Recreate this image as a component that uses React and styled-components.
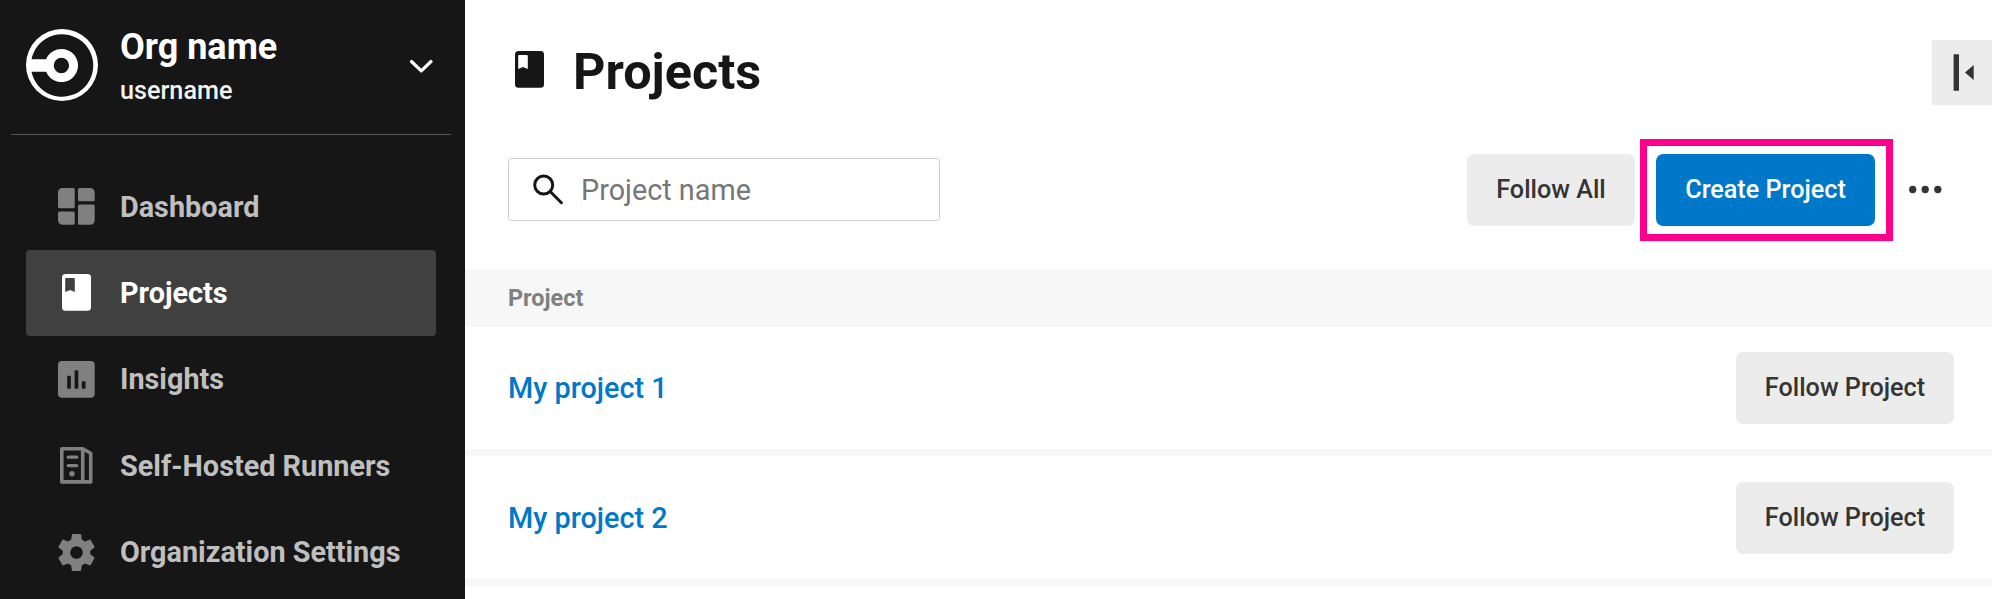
import React from 'react';
import styled, { createGlobalStyle } from 'styled-components';

const GlobalStyle = createGlobalStyle`
  *, *::before, *::after { box-sizing: border-box; }
  body {
    margin: 0;
    background: #fff;
    color: #161616;
    font-family: Roboto, "Liberation Sans", sans-serif;
    overflow: hidden;
  }
`;

const Page = styled.div`
  display: flex;
  width: 1992px;
  height: 599px;
  overflow: hidden;
`;

const Sidebar = styled.aside`
  flex: none;
  width: 465px;
  height: 100%;
  background: #161616;
`;

const OrgSwitcher = styled.header`
  display: flex;
  align-items: flex-start;
  height: 135px;
  margin: 0 14px 0 11px;
  padding: 29px 18px 0 15px;
  border-bottom: 1px solid #555;

  > svg { flex: none; }
`;

const OrgText = styled.div`
  flex: 1;
  margin-left: 22px;
`;

const OrgName = styled.div`
  height: 36px;
  color: #fff;
  font-size: 36px;
  font-weight: 700;
  line-height: 36px;
`;

const UserName = styled.div`
  margin-top: 11px;
  color: #f3f3f3;
  font-size: 25.2px;
  font-weight: 500;
  line-height: 30px;
`;

const ChevronSlot = styled.span`
  display: flex;
  margin-top: 30px;
`;

const Nav = styled.nav`
  display: flex;
  flex-direction: column;
  padding: 28.4px 29px 0 26px;
`;

const NavItem = styled.a`
  display: flex;
  align-items: center;
  height: 86.4px;
  border-radius: 4px;
  background: ${({ $active }) => ($active ? '#404040' : 'transparent')};
  color: ${({ $active }) => ($active ? '#fff' : '#bfbfbf')};
  font-size: 28.8px;
  font-weight: 700;
  line-height: 36px;
  white-space: nowrap;
`;

const NavIcon = styled.span`
  display: flex;
  justify-content: center;
  width: 37px;
  margin: 0 24.6px 0 32.4px;
  color: ${({ $active }) => ($active ? '#fff' : '#808080')};
`;

const Main = styled.main`
  flex: 1;
  display: flex;
  flex-direction: column;
  min-width: 0;
`;

const TitleBar = styled.header`
  display: flex;
  align-items: flex-start;
  height: 154px;
  padding: 40px 0 0 50px;
`;

const TitleIcon = styled.span`
  display: flex;
  margin-top: 11px;
`;

const Title = styled.h1`
  flex: 1;
  margin: 0 0 0 29px;
  font-size: 50.4px;
  font-weight: 700;
  line-height: 64px;
`;

const CollapseButton = styled.button`
  display: flex;
  width: 60px;
  height: 65px;
  padding: 0;
  border: 0;
  background: #ececec;
  color: #333;
`;

const Toolbar = styled.div`
  display: flex;
  align-items: flex-start;
  height: 115px;
  padding: 0 50px 0 43px;
`;

const SearchBox = styled.label`
  display: flex;
  align-items: center;
  width: 432px;
  height: 63px;
  margin: 4px auto 0 0;
  padding-left: 24px;
  border: 1px solid #ccc;
  border-radius: 3.6px;
`;

const SearchInput = styled.input`
  width: 330px;
  margin-left: 17px;
  padding: 0;
  border: 0;
  outline: 0;
  background: transparent;
  font: 400 28.8px/36px Roboto, "Liberation Sans", sans-serif;

  &::placeholder { color: #767676; opacity: 1; }
`;

const Button = styled.button`
  flex: none;
  width: ${({ $width }) => $width}px;
  height: 72px;
  padding: 0;
  border: 0;
  border-radius: 7.2px;
  background: ${({ $primary }) => ($primary ? '#0078ca' : '#ececec')};
  color: ${({ $primary }) => ($primary ? '#fff' : '#343434')};
  font: 500 25.2px/32px Roboto, "Liberation Sans", sans-serif;
  white-space: nowrap;
`;

const Highlight = styled.div`
  margin: -15px 16px 0 5px;
  padding: 8px 11px 9px 9px;
  height: 102px;
  border: 7px solid #ff008c;
`;

const MoreButton = styled.button`
  display: flex;
  margin: 31px 0 0;
  padding: 0;
  border: 0;
  background: none;
  color: #343434;
`;

const TableHead = styled.div`
  display: flex;
  align-items: center;
  height: 58px;
  padding-left: 43px;
  background: #f7f7f7;
  color: #808080;
  font-size: 23.4px;
  font-weight: 700;
  line-height: 28px;
`;

const ProjectRow = styled.div`
  display: flex;
  align-items: center;
  justify-content: space-between;
  height: ${({ $height }) => $height}px;
  padding: 0 38px 0 43px;
  border-bottom: 7px solid #f7f7f7;
`;

const ProjectLink = styled.a`
  color: #0078ca;
  font-size: 28.8px;
  font-weight: 500;
  line-height: 36px;
`;

const Logo = () => (
  <svg width="72" height="72" viewBox="0 0 72 72">
    <path
      fill="#fff"
      fillRule="evenodd"
      d="M36 0a36 36 0 1 1 0 72a36 36 0 0 1 0-72zM5.500 30.200A31.200 31.200 0 1 1 5.500 42.800H20.100A16.600 16.600 0 1 0 20.100 30.200zM35.400 28.800a7.700 7.700 0 1 0 0 15.400a7.700 7.700 0 0 0 0-15.400z"
    />
  </svg>
);

const Chevron = () => (
  <svg width="24" height="15" viewBox="0 0 24 15" fill="none" stroke="#fff" strokeWidth="3.200" strokeLinecap="round" strokeLinejoin="round">
    <path d="M2.500 2.500L12.300 11.800L22 2.500" />
  </svg>
);

const BookIcon = () => (
  <svg width="29" height="37" viewBox="0 0 29 37">
    <path
      fill="currentColor"
      fillRule="evenodd"
      d="M3.500 0H25.500A3.500 3.500 0 0 1 29 3.500V33.200A3.500 3.500 0 0 1 25.500 36.700H3.500A3.500 3.500 0 0 1 0 33.200V3.500A3.500 3.500 0 0 1 3.500 0zM4.200 4A1 1 0 0 0 3.200 5V18L8 16L12.800 18V5A1 1 0 0 0 11.800 4z"
    />
  </svg>
);

const DashboardIcon = () => (
  <svg width="37" height="37" viewBox="0 0 37 37" fill="currentColor">
    <path d="M4.500 0H15.200a1.500 1.500 0 0 1 1.500 1.500V18.800a1.500 1.500 0 0 1-1.500 1.500H1.500A1.500 1.500 0 0 1 0 18.800V4.500A4.500 4.500 0 0 1 4.500 0z" />
    <path d="M1.500 23.600H15.200a1.500 1.500 0 0 1 1.500 1.500V35.300a1.500 1.500 0 0 1-1.500 1.500H4.500A4.500 4.500 0 0 1 0 32.300V25.100a1.500 1.500 0 0 1 1.500-1.500z" />
    <path d="M21.500 0H32.200a4.500 4.500 0 0 1 4.500 4.500V11.700a1.500 1.500 0 0 1-1.500 1.500H21.500A1.500 1.500 0 0 1 20 11.700V1.500A1.500 1.500 0 0 1 21.500 0z" />
    <path d="M21.500 16.500H35.200a1.500 1.500 0 0 1 1.500 1.500V32.300a4.500 4.500 0 0 1-4.500 4.500H21.500A1.500 1.500 0 0 1 20 35.300V18a1.500 1.500 0 0 1 1.500-1.500z" />
  </svg>
);

const InsightsIcon = () => (
  <svg width="37" height="37" viewBox="0 0 37 37">
    <rect width="36.700" height="36.700" rx="4" fill="currentColor" />
    <g fill="#161616">
      <rect x="9.200" y="14.800" width="3.700" height="13" rx="0.800" />
      <rect x="16.600" y="9.200" width="3.700" height="18.600" rx="0.800" />
      <rect x="23.800" y="20.200" width="3.700" height="7.600" rx="0.800" />
    </g>
  </svg>
);

const RunnersIcon = () => (
  <svg width="37" height="37" viewBox="0 0 37 37" fill="none" stroke="currentColor" strokeWidth="3.600" strokeLinejoin="round">
    <path d="M3.800 1.800H24.700V34.900H3.800z" />
    <path d="M24.700 1.800L32.700 6.300V34.900H24.700" />
    <path d="M10.200 10.200H18.800M10.200 18.600H18.800" strokeWidth="3.200" strokeLinecap="round" />
    <circle cx="14" cy="26.800" r="2.700" fill="currentColor" stroke="none" />
  </svg>
);

const SettingsIcon = () => (
  <svg width="37" height="37" viewBox="2 2 20 20" fill="currentColor">
    <path d="M19.430 12.980c.04-.32.07-.64.07-.98s-.03-.66-.07-.98l2.110-1.650c.19-.15.24-.42.12-.64l-2-3.460c-.12-.22-.39-.3-.61-.22l-2.490 1c-.52-.4-1.080-.73-1.690-.98l-.38-2.650C14.460 2.180 14.250 2 14 2h-4c-.25 0-.46.18-.49.42l-.38 2.650c-.61.25-1.170.59-1.690.98l-2.490-1c-.23-.09-.49 0-.61.22l-2 3.460c-.13.22-.07.49.12.64l2.110 1.650c-.04.32-.07.65-.07.98s.03.66.07.98l-2.110 1.650c-.19.15-.24.42-.12.64l2 3.460c.12.22.39.3.61.22l2.490-1c.52.4 1.080.73 1.690.98l.38 2.650c.03.24.24.42.49.42h4c.25 0 .46-.18.49-.42l.38-2.650c.61-.25 1.170-.59 1.690-.98l2.490 1c.23.09.49 0 .61-.22l2-3.460c.12-.22.07-.49-.12-.64l-2.110-1.650zM12 15.400a3.400 3.400 0 1 1 0-6.800a3.400 3.400 0 0 1 0 6.800z" />
  </svg>
);

const SearchIcon = () => (
  <svg width="31" height="31" viewBox="0 0 31 31" fill="none" stroke="#161616" strokeWidth="3">
    <circle cx="10.700" cy="11" r="9" />
    <path d="M17.200 17.500L28.400 28.700" strokeLinecap="round" />
  </svg>
);

const CollapseIcon = () => (
  <svg width="60" height="65" viewBox="0 0 60 65" fill="currentColor">
    <rect x="21.600" y="14.200" width="5.400" height="36.600" rx="0.600" />
    <path d="M33 32.500L41.700 24.900V40.100z" />
  </svg>
);

const MoreIcon = () => (
  <svg width="33" height="9" viewBox="0 0 33 9" fill="currentColor">
    <circle cx="3.700" cy="4.500" r="3.650" />
    <circle cx="16.200" cy="4.500" r="3.650" />
    <circle cx="28.800" cy="4.500" r="3.650" />
  </svg>
);

const navItems = [
  { label: 'Dashboard', icon: <DashboardIcon /> },
  { label: 'Projects', icon: <BookIcon />, active: true },
  { label: 'Insights', icon: <InsightsIcon /> },
  { label: 'Self-Hosted Runners', icon: <RunnersIcon /> },
  { label: 'Organization Settings', icon: <SettingsIcon /> },
];

const projects = [
  { name: 'My project 1', height: 129 },
  { name: 'My project 2', height: 130 },
];

export default function App() {
  return (
    <Page>
      <GlobalStyle />
      <Sidebar>
        <OrgSwitcher>
          <Logo />
          <OrgText>
            <OrgName>Org name</OrgName>
            <UserName>username</UserName>
          </OrgText>
          <ChevronSlot><Chevron /></ChevronSlot>
        </OrgSwitcher>
        <Nav>
          {navItems.map(({ label, icon, active }) => (
            <NavItem key={label} $active={active}>
              <NavIcon $active={active}>{icon}</NavIcon>
              {label}
            </NavItem>
          ))}
        </Nav>
      </Sidebar>
      <Main>
        <TitleBar>
          <TitleIcon><BookIcon /></TitleIcon>
          <Title>Projects</Title>
          <CollapseButton aria-label="Collapse panel"><CollapseIcon /></CollapseButton>
        </TitleBar>
        <Toolbar>
          <SearchBox>
            <SearchIcon />
            <SearchInput placeholder="Project name" />
          </SearchBox>
          <Button $width={168}>Follow All</Button>
          <Highlight>
            <Button $primary $width={219}>Create Project</Button>
          </Highlight>
          <MoreButton aria-label="More"><MoreIcon /></MoreButton>
        </Toolbar>
        <TableHead>Project</TableHead>
        {projects.map(({ name, height }) => (
          <ProjectRow key={name} $height={height}>
            <ProjectLink>{name}</ProjectLink>
            <Button $width={218}>Follow Project</Button>
          </ProjectRow>
        ))}
      </Main>
    </Page>
  );
}
